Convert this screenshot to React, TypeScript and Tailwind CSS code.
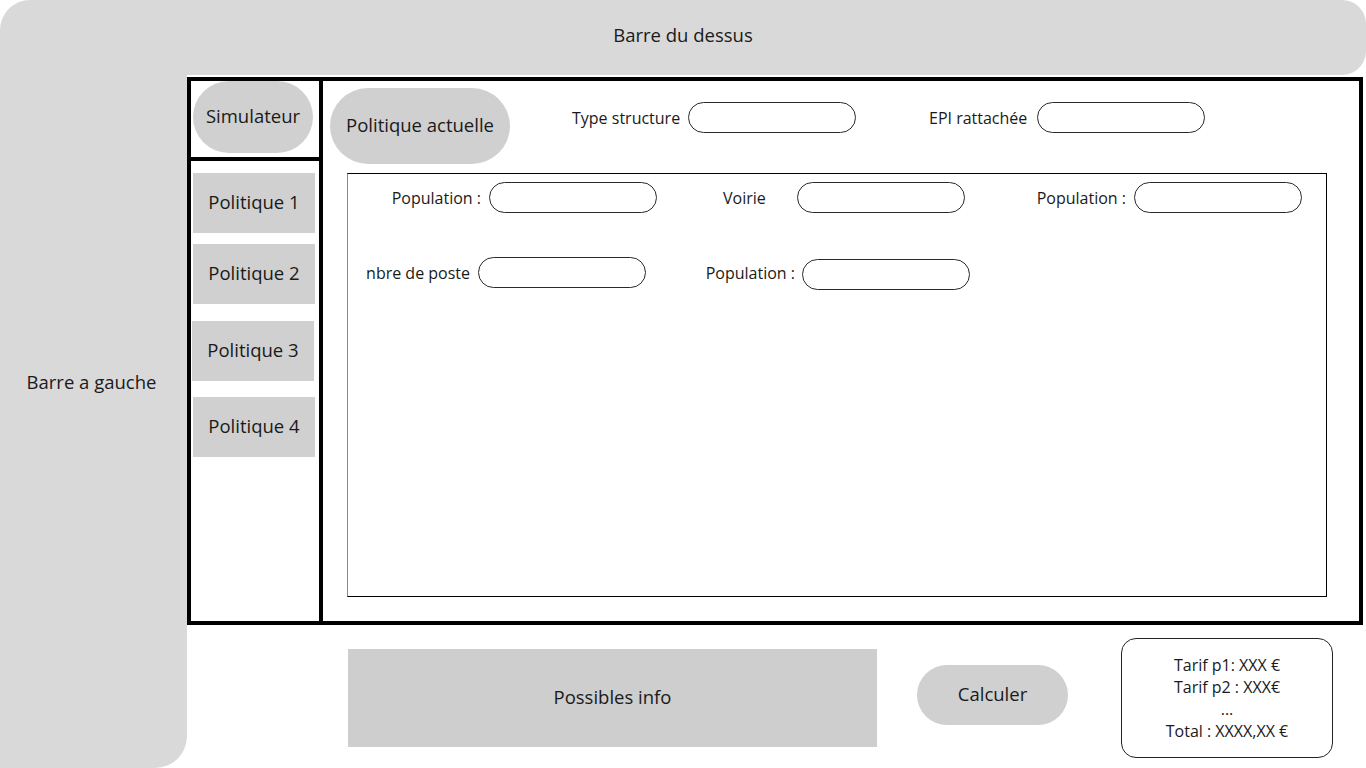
import React from "react";

// champ de saisie arrondi (maquette)
const Input = ({ className = "" }: { className?: string }) => (
  <div className={`w-[168px] h-[31px] shrink-0 rounded-full border border-[#2a2a2a] bg-white ${className}`} />
);

const politiques = [
  { label: "Politique 1", className: "mt-[12px] ml-[2px]" },
  { label: "Politique 2", className: "mt-[11px] ml-[2px]" },
  { label: "Politique 3", className: "mt-[17px] ml-[1px]" },
  { label: "Politique 4", className: "mt-[16px] ml-[2px]" },
];

export default function App() {
  return (
    <div
      className="w-[1366px] h-[768px] overflow-hidden bg-white flex flex-col text-[#1a1a1a]"
      style={{ fontFamily: '"Open Sans", "Noto Sans", sans-serif' }}
    >
      {/* Barre du dessus */}
      <div className="h-[75px] shrink-0 bg-[#d9d9d9] rounded-tl-[30px] rounded-tr-[24px] rounded-br-[24px] flex items-center justify-center pb-[5px] text-[18.5px]">
        Barre du dessus
      </div>

      <div className="flex flex-1">
        {/* Barre a gauche */}
        <div className="w-[187px] shrink-0 bg-[#d9d9d9] rounded-br-[32px] flex items-center justify-center pb-[79px] pr-[4px] text-[18.5px]">
          Barre a gauche
        </div>

        <div className="flex flex-col flex-1">
          {/* Cadre principal */}
          <div className="mt-[2px] w-[1176px] h-[548px] border-4 border-black flex">
            {/* Colonne simulateur */}
            <div className="w-[132px] shrink-0 border-r-4 border-black flex flex-col">
              <div className="h-[80px] border-b-4 border-black">
                <div className="ml-[2px] w-[120px] h-[72px] rounded-full bg-[#d0d0d0] flex items-center justify-center pb-[2px] text-[18.5px]">
                  Simulateur
                </div>
              </div>
              {politiques.map((p) => (
                <div
                  key={p.label}
                  className={`w-[122px] h-[60px] bg-[#d0d0d0] flex items-center justify-center pb-[2px] text-[18.5px] ${p.className}`}
                >
                  {p.label}
                </div>
              ))}
            </div>

            {/* Contenu */}
            <div className="flex-1 flex flex-col">
              <div className="flex items-start pt-[7px] pl-[7px]">
                <div className="w-[180px] h-[76px] rounded-full bg-[#d0d0d0] flex items-center justify-center pb-[2px] text-[18.5px]">
                  Politique actuelle
                </div>
                <div className="flex items-center mt-[14px] text-[16px] whitespace-nowrap">
                  <span className="ml-[62px] w-[116px]">Type structure</span>
                  <Input />
                  <span className="ml-[73px] w-[108px]">EPI rattachée</span>
                  <Input />
                </div>
              </div>

              <div className="ml-[24px] mt-[9px] w-[980px] h-[424px] border border-black border-l-[#8a8a8a] text-[16px] whitespace-nowrap">
                <div className="flex items-center pt-[8px]">
                  <span className="w-[133px] text-right">Population :</span>
                  <Input className="ml-[8px]" />
                  <span className="ml-[66px] w-[74px]">Voirie</span>
                  <Input />
                  <span className="w-[161px] text-right">Population :</span>
                  <Input className="ml-[8px]" />
                </div>
                <div className="flex items-center mt-[42px]">
                  <span className="w-[122px] text-right">nbre de poste</span>
                  <Input className="ml-[8px]" />
                  <span className="w-[149px] text-right">Population :</span>
                  <Input className="ml-[7px] mt-[4px]" />
                </div>
              </div>
            </div>
          </div>

          {/* Bas de page */}
          <div className="flex items-start">
            <div className="ml-[161px] mt-[24px] w-[529px] h-[98px] bg-[#cecece] flex items-center justify-center pb-[2px] text-[18.5px]">
              Possibles info
            </div>
            <div className="ml-[40px] mt-[40px] w-[151px] h-[60px] rounded-full bg-[#d0d0d0] flex items-center justify-center pb-[2px] text-[18.5px]">
              Calculer
            </div>
            <div className="ml-[53px] mt-[13px] w-[212px] h-[120px] rounded-[15px] border border-[#222] flex flex-col items-center justify-center text-[16px] leading-[22px]">
              <span>Tarif p1: XXX €</span>
              <span>Tarif p2 : XXX€</span>
              <span>...</span>
              <span>Total : XXXX,XX €</span>
            </div>
          </div>
        </div>
      </div>
    </div>
  );
}
